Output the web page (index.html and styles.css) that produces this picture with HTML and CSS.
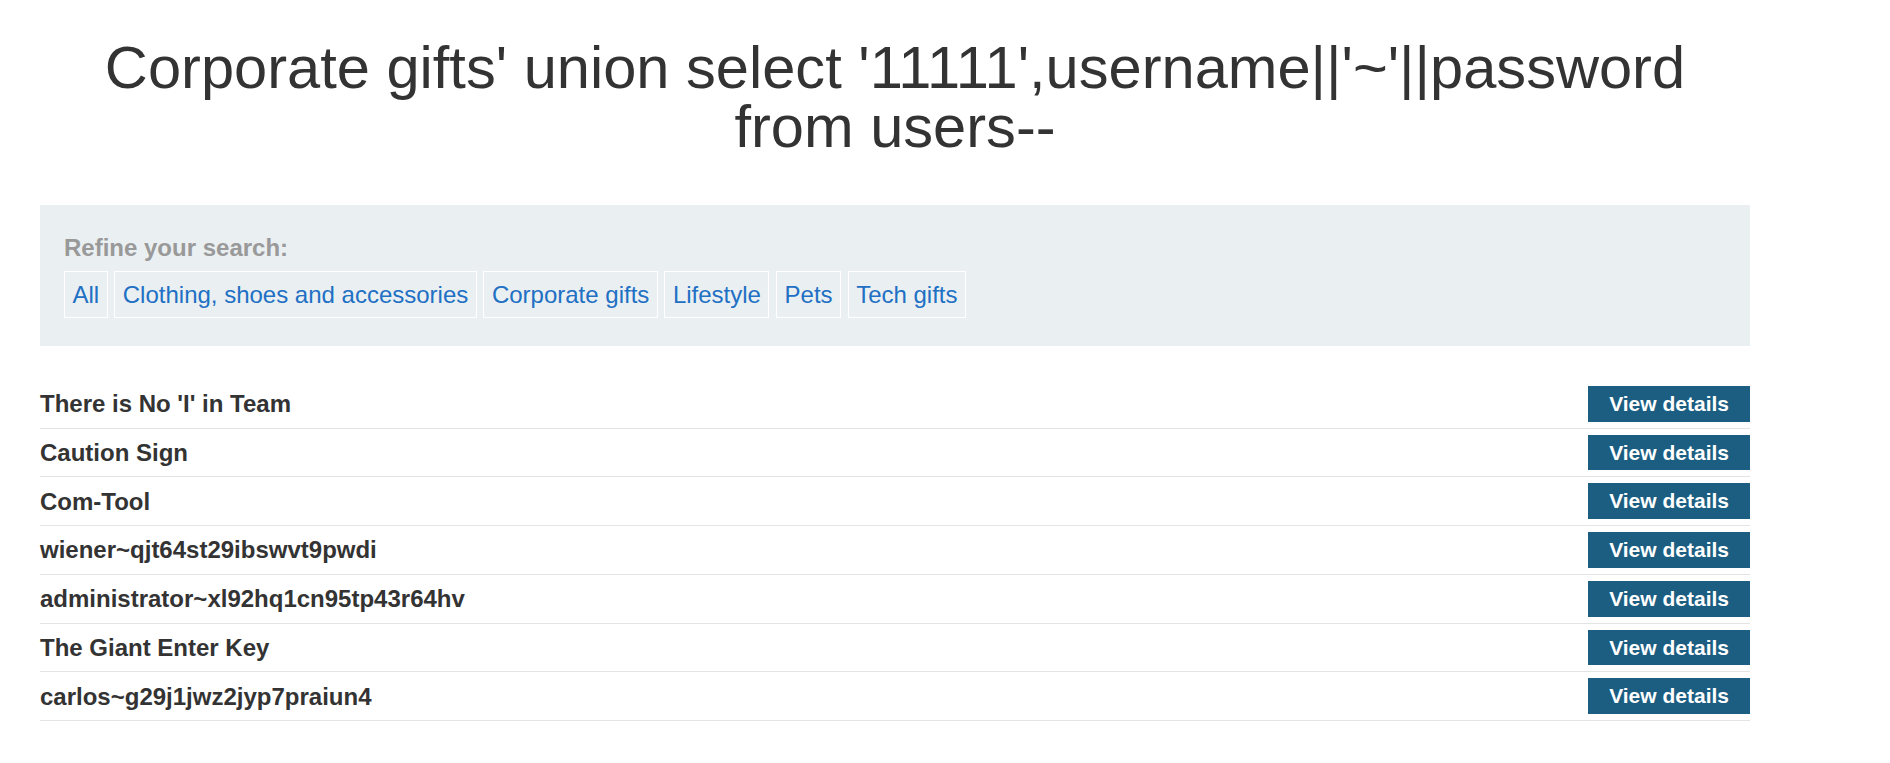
FILE: index.html
```html
<!DOCTYPE html>
<html lang="en">
<head>
<meta charset="utf-8">
<title>Corporate gifts</title>
<link rel="stylesheet" href="styles.css">
</head>
<body>
<div class="container">
  <h1 class="title">Corporate gifts' union select '11111',username||'~'||password from users--</h1>
  <section class="filter">
    <p class="filter-label">Refine your search:</p>
    <div class="filter-links">
      <a class="filter-link" href="#">All</a>
      <a class="filter-link" href="#">Clothing, shoes and accessories</a>
      <a class="filter-link" href="#">Corporate gifts</a>
      <a class="filter-link" href="#">Lifestyle</a>
      <a class="filter-link" href="#">Pets</a>
      <a class="filter-link" href="#">Tech gifts</a>
    </div>
  </section>
  <ul class="products">
    <li class="product"><span class="product-name">There is No 'I' in Team</span><a class="button" href="#">View details</a></li>
    <li class="product"><span class="product-name">Caution Sign</span><a class="button" href="#">View details</a></li>
    <li class="product"><span class="product-name">Com-Tool</span><a class="button" href="#">View details</a></li>
    <li class="product"><span class="product-name">wiener~qjt64st29ibswvt9pwdi</span><a class="button" href="#">View details</a></li>
    <li class="product"><span class="product-name">administrator~xl92hq1cn95tp43r64hv</span><a class="button" href="#">View details</a></li>
    <li class="product"><span class="product-name">The Giant Enter Key</span><a class="button" href="#">View details</a></li>
    <li class="product"><span class="product-name">carlos~g29j1jwz2jyp7praiun4</span><a class="button" href="#">View details</a></li>
  </ul>
</div>
</body>
</html>
```

FILE: styles.css
```css
html, body {
  background: #fff;
}

body {
  margin: 0;
  font-family: "Liberation Sans", Arial, sans-serif;
  font-size: 24px;
  color: #333;
}

.container {
  width: 1710px;
  margin-left: 40px;
}

.title {
  margin: 38px 0 0;
  padding: 0 20px;
  font-size: 59.6px;
  line-height: 59px;
  font-weight: normal;
  text-align: center;
  color: #333;
}

.filter {
  margin-top: 49px;
  background: #eaeff2;
  padding: 29px 24px 28px;
}

.filter-label {
  margin: 0 0 10px;
  font-weight: bold;
  color: #999;
  line-height: 27px;
}

.filter-links {
  display: flex;
  flex-wrap: wrap;
  gap: 6.6px;
}

.filter-link {
  border: 1px solid #fff;
  padding: 9px 7.5px;
  line-height: 27px;
  color: #2170c4;
  text-decoration: none;
}

.products {
  list-style: none;
  margin: 34px 0 0;
  padding: 0;
}

.product {
  display: flex;
  justify-content: space-between;
  align-items: center;
  padding: 6px 0;
  border-bottom: 1px solid #e4e4e4;
}

.product-name {
  font-weight: bold;
  line-height: 27px;
}

.button {
  background: #1b5e82;
  color: #fff;
  font-weight: bold;
  font-size: 21px;
  line-height: 23.7px;
  padding: 6px 21px;
  text-decoration: none;
}
```
